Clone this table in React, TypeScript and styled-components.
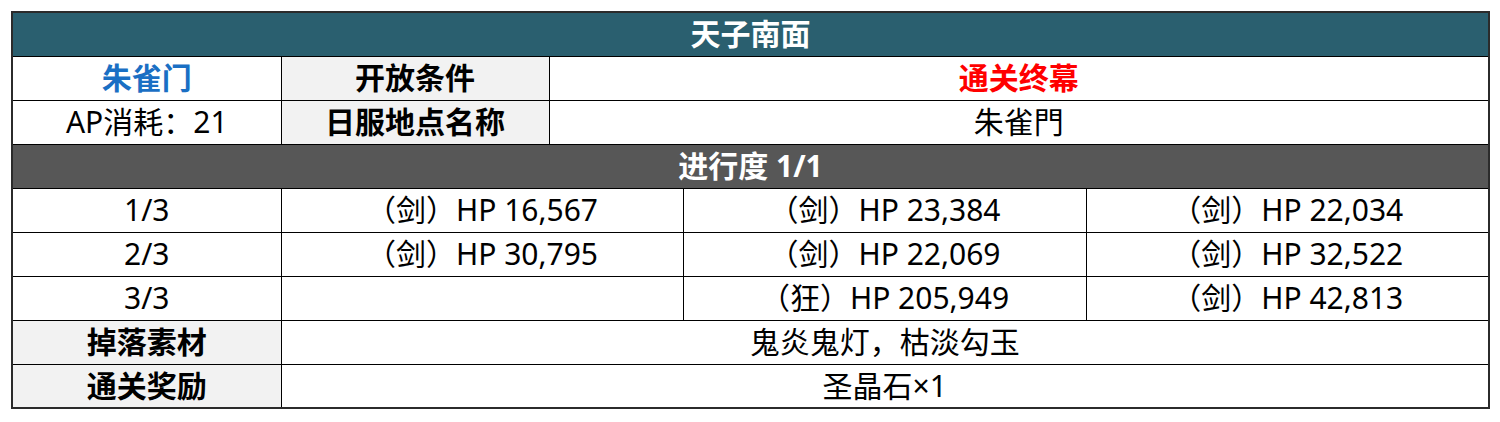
import React from "react";
import styled, { createGlobalStyle } from "styled-components";

const Global = createGlobalStyle`
  html, body { margin: 0; padding: 0; background: #ffffff; }
  body { font-family: "Noto Sans", "Noto Sans CJK SC", sans-serif; }
`;

const Page = styled.div`
  padding: 11px 12px 12px 11px;
`;

const Table = styled.table`
  width: 1477px;
  border-collapse: collapse;
  table-layout: fixed;
  border: 2px solid #2b2b2b;
  font-family: "Noto Sans", "Noto Sans CJK SC", sans-serif;
  font-size: 30px;
  color: #000;
`;

const Row = styled.tr`
  height: 44px;
`;

type CellProps = { $tone?: "teal" | "gray" | "light" | "white"; $bold?: boolean; $color?: string };

const bg = (t?: CellProps["$tone"]) =>
  t === "teal" ? "#2a5f6f" : t === "gray" ? "#575757" : t === "light" ? "#f2f2f2" : "#ffffff";

const Cell = styled.td<CellProps>`
  border: 1px solid #000;
  padding: 0 4px;
  text-align: center;
  vertical-align: middle;
  line-height: 40px;
  white-space: nowrap;
  background: ${(p) => bg(p.$tone)};
  font-weight: ${(p) => (p.$bold ? 700 : 400)};
  color: ${(p) => p.$color ?? (p.$tone === "teal" || p.$tone === "gray" ? "#ffffff" : "#000000")};
`;

const waves = [
  { n: "1/3", e: ["（剑）HP 16,567", "（剑）HP 23,384", "（剑）HP 22,034"] },
  { n: "2/3", e: ["（剑）HP 30,795", "（剑）HP 22,069", "（剑）HP 32,522"] },
  { n: "3/3", e: ["", "（狂）HP 205,949", "（剑）HP 42,813"] },
];

export default function App() {
  return (
    <Page>
      <Global />
      <Table>
        <colgroup>
          <col style={{ width: 269 }} />
          <col style={{ width: 268 }} />
          <col style={{ width: 134 }} />
          <col style={{ width: 403 }} />
          <col style={{ width: 403 }} />
        </colgroup>
        <tbody>
          <Row>
            <Cell colSpan={5} $tone="teal" $bold>天子南面</Cell>
          </Row>
          <Row>
            <Cell $bold $color="#1a6fc4">朱雀门</Cell>
            <Cell $tone="light" $bold>开放条件</Cell>
            <Cell colSpan={3} $bold $color="#ff0000">通关终幕</Cell>
          </Row>
          <Row>
            <Cell>AP消耗：21</Cell>
            <Cell $tone="light" $bold>日服地点名称</Cell>
            <Cell colSpan={3}>朱雀門</Cell>
          </Row>
          <Row>
            <Cell colSpan={5} $tone="gray" $bold>进行度 1/1</Cell>
          </Row>
          {waves.map((w) => (
            <Row key={w.n}>
              <Cell>{w.n}</Cell>
              <Cell colSpan={2}>{w.e[0]}</Cell>
              <Cell>{w.e[1]}</Cell>
              <Cell>{w.e[2]}</Cell>
            </Row>
          ))}
          <Row>
            <Cell $tone="light" $bold>掉落素材</Cell>
            <Cell colSpan={4}>鬼炎鬼灯，枯淡勾玉</Cell>
          </Row>
          <Row>
            <Cell $tone="light" $bold>通关奖励</Cell>
            <Cell colSpan={4}>圣晶石×1</Cell>
          </Row>
        </tbody>
      </Table>
    </Page>
  );
}
